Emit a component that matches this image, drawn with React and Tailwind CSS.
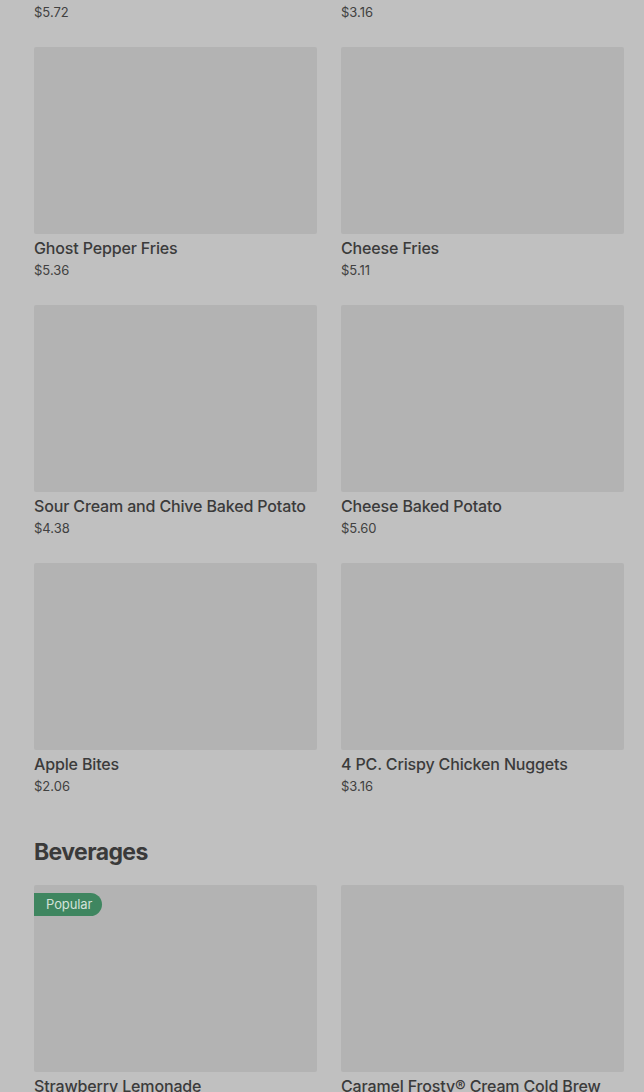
import React from 'react';

// Menu grid, seen under a dim overlay
const sides = [
    { name: 'Baconator Fries', price: '$5.72' },
    { name: '6 PC. Spicy Chicken Nuggets', price: '$3.16' },
    { name: 'Ghost Pepper Fries', price: '$5.36' },
    { name: 'Cheese Fries', price: '$5.11' },
    { name: 'Sour Cream and Chive Baked Potato', price: '$4.38' },
    { name: 'Cheese Baked Potato', price: '$5.60' },
    { name: 'Apple Bites', price: '$2.06' },
    { name: '4 PC. Crispy Chicken Nuggets', price: '$3.16' },
];

const beverages = [
    { name: 'Strawberry Lemonade', price: '$3.49', popular: true },
    { name: 'Caramel Frosty® Cream Cold Brew', price: '$3.99' },
];

const MenuCard = ({ item }) => (
    <div className="flex flex-col">
        <div className="relative h-[187px] bg-[#b3b3b3] rounded-[2px]">
            {item.popular && (
                <span className="absolute left-0 top-2 h-[23px] flex items-center pl-3 pr-[10px] rounded-r-full bg-[#3f8660] text-[13px] tracking-[-0.1px] text-[#d3e2d9]">
                    Popular
                </span>
            )}
        </div>
        <div className="mt-1 text-[16px] leading-5 font-medium tracking-[-0.15px] text-[#3b3b3b] whitespace-nowrap">
            {item.name}
        </div>
        <div className="mt-1 text-[13px] leading-4 text-[#414141]">{item.price}</div>
    </div>
);

export default function App() {
    return (
        <div className="w-[644px] h-[1092px] overflow-hidden bg-[#c0c0c0] font-['Inter',sans-serif]">
            <div className="-mt-[211px] pl-[34px] pr-[20px]">
                <div className="grid grid-cols-2 gap-x-6 gap-y-[27px]">
                    {sides.map((item) => (
                        <MenuCard key={item.name} item={item} />
                    ))}
                </div>
                <h2 className="mt-[42px] text-[23px] leading-8 font-bold tracking-[-0.6px] text-[#3a3a3a]">
                    Beverages
                </h2>
                <div className="mt-[17px] grid grid-cols-2 gap-x-6 gap-y-[27px]">
                    {beverages.map((item) => (
                        <MenuCard key={item.name} item={item} />
                    ))}
                </div>
            </div>
        </div>
    );
}
